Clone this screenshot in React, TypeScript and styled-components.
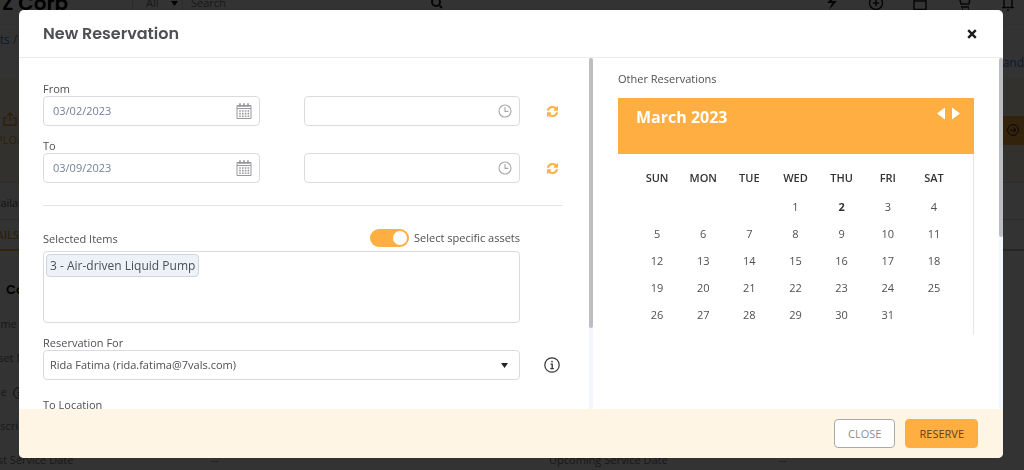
import React, { useState } from "react";
import styled, { createGlobalStyle } from "styled-components";

const orange = "#ffae41";
const border = "#dadbde";
const sans = '"Open Sans", "Noto Sans", sans-serif';
const display = 'Poppins, Inter, "Open Sans", sans-serif';

const GlobalStyle = createGlobalStyle`
  *, *::before, *::after { box-sizing: border-box; }
  body {
    margin: 0;
    overflow: hidden;
    background: #fff;
    color: #4e4f53;
    font-family: ${sans};
    font-size: 11px;
    line-height: 16px;
  }
  button, input, select { font: inherit; color: inherit; }
  button { cursor: pointer; }
`;

/* ---------- page behind the dialog ---------- */

const Page = styled.div`
  height: 100vh;
  overflow: hidden;
  color: #777;
`;

const TopBar = styled.header`
  display: flex;
  align-items: flex-start;
  height: 25px;
  padding-left: 2px;
  border-bottom: 1px solid #eee;
`;

const Company = styled.div`
  width: 130px;
  margin-top: -10px;
  color: #000;
  font: 600 20px/26px ${display};
`;

const Scope = styled.div`
  display: flex;
  gap: 12px;
  width: 51px;
  height: 16px;
  margin-top: -5px;
  padding-left: 13px;
  border: solid #ddd;
  border-width: 0 1px;
`;

const SearchLabel = styled.div`
  flex: 1;
  display: flex;
  gap: 205px;
  margin-top: -5px;
  padding-left: 8px;
`;

const TopIcons = styled.div`
  display: flex;
  gap: 28px;
  margin-top: -5px;
  padding-right: 8px;
  color: #222;
`;

const Crumbs = styled.div`
  display: flex;
  justify-content: space-between;
  height: 53px;
  padding-top: 7px;
  margin-left: -26px;
  font-size: 12px;
`;

const Link = styled.a<{ $low?: boolean }>`
  color: #4a7fd6;
  text-decoration: none;
  padding-top: ${(p) => (p.$low ? 23 : 0)}px;
`;

const Banner = styled.div`
  display: flex;
  justify-content: space-between;
  align-items: center;
  height: 105px;
  background: #fff5e2;
  border-bottom: 1px solid #ddd;
`;

const Upload = styled.div`
  display: flex;
  flex-direction: column;
  align-items: center;
  gap: 6px;
  margin-left: -12px;
  color: #e39a3a;
`;

const CheckOut = styled.div`
  display: flex;
  align-items: center;
  height: 29px;
  padding: 0 5px 0 26px;
  background: ${orange};
  color: #222;
`;

const Availability = styled.div`
  height: 37px;
  padding-top: 12px;
  margin-left: -12px;
  color: #555;
  border-bottom: 1px solid #ddd;
`;

const Tabs = styled.div`
  height: 31px;
  border-bottom: 2px solid #bbb;
`;

const Tab = styled.div`
  width: 80px;
  height: 31px;
  padding-top: 7px;
  margin-left: -24px;
  color: #e39a3a;
  font-weight: 600;
  border-bottom: 2px solid ${orange};
`;

const Details = styled.div`
  padding-top: 30px;
  margin-left: -14px;
`;

const DetailsTitle = styled.div`
  height: 34px;
  padding-left: 20px;
  color: #000;
  font: 600 13px/18px ${display};
`;

const DetailRow = styled.div`
  display: grid;
  grid-template-columns: 225px 338px 230px 1fr;
  height: 34px;
  line-height: 18px;
`;

const WithIcon = styled.span`
  display: flex;
  align-items: flex-start;
  gap: 6px;
  > svg { margin-top: 4px; }
`;

/* ---------- dialog ---------- */

const Overlay = styled.div`
  position: fixed;
  inset: 0;
  display: flex;
  padding: 10px 21px 12px 19px;
  background: rgba(0, 0, 0, 0.8);
`;

const Dialog = styled.section`
  flex: 1;
  display: flex;
  flex-direction: column;
  min-width: 0;
  overflow: hidden;
  background: #fff;
  border-radius: 5px;
`;

const DialogHeader = styled.header`
  display: flex;
  align-items: center;
  justify-content: space-between;
  flex: none;
  height: 48px;
  padding: 0 26px 0 24px;
  border-bottom: 1px solid #ececec;
`;

const Title = styled.h2`
  margin: 0;
  color: #4e4f53;
  font: 600 16px/24px ${display};
`;

const IconButton = styled.button`
  display: flex;
  padding: 0;
  border: 0;
  background: none;
`;

const DialogBody = styled.div`
  flex: 1;
  display: flex;
  min-height: 0;
`;

const Panel = styled.div<{ $span: number }>`
  flex: ${(p) => p.$span} 1 0;
  display: flex;
  min-width: 0;
`;

const Scroller = styled.div`
  flex: 1;
  min-width: 0;
  overflow: hidden;
`;

const Track = styled.div`
  flex: none;
  width: 4px;
  background: #f2f8fd;
`;

const Thumb = styled.div<{ $size: number }>`
  height: ${(p) => p.$size}%;
  background: #bdbdc4;
  border-radius: 2px;
`;

const Form = styled.form`
  padding: 22px 5px 0 24px;
`;

const FormRow = styled.div<{ $gap: number }>`
  display: grid;
  grid-template-columns: minmax(0, 1fr) 64px;
  margin-bottom: ${(p) => p.$gap}px;
`;

const Pair = styled.div`
  display: grid;
  grid-template-columns: 1fr 1fr;
  column-gap: 44px;
  align-items: end;
`;

const Aside = styled.div`
  display: flex;
  align-items: center;
  justify-content: center;
  align-self: end;
  height: 30px;
`;

const Label = styled.label`
  display: block;
  height: 16px;
  line-height: 18px;
`;

const InputBox = styled.div`
  display: flex;
  align-items: center;
  height: 30px;
  padding: 0 7px 0 9px;
  border: 1px solid ${border};
  border-radius: 4px;
`;

const TextInput = styled.input`
  flex: 1;
  min-width: 0;
  padding: 0;
  border: 0;
  outline: 0;
  background: none;
  color: #74819a;
`;

const Divider = styled.hr`
  height: 1px;
  margin: 22px 21px 23px 0;
  border: 0;
  background: #e4e4e6;
`;

const ItemsHead = styled.div`
  display: flex;
  align-items: center;
  justify-content: space-between;
  height: 18px;
  margin-bottom: 4px;
`;

const ToggleLabel = styled.label`
  display: flex;
  align-items: center;
  gap: 5px;
  line-height: 18px;
`;

const Toggle = styled.input`
  appearance: none;
  display: flex;
  justify-content: flex-end;
  width: 39px;
  height: 18px;
  margin: 0;
  padding: 2px;
  border-radius: 9px;
  background: #c5c7cc;
  &:checked { background: ${orange}; }
  &:not(:checked) { justify-content: flex-start; }
  &::before {
    content: "";
    width: 14px;
    height: 14px;
    border-radius: 50%;
    background: #fff;
  }
`;

const ItemsBox = styled.div`
  height: 72px;
  padding: 2px;
  border: 1px solid ${border};
  border-radius: 4px;
`;

const Tag = styled.span`
  display: inline-block;
  height: 23px;
  padding: 0 3px;
  border: 1px solid #ced4e2;
  border-radius: 4px;
  background: #edf1f8;
  font-size: 12px;
  line-height: 21px;
`;

const SelectBox = styled.div`
  display: grid;
  align-items: center;
  > * { grid-area: 1 / 1; }
  > svg { justify-self: end; margin-right: 12px; pointer-events: none; }
`;

const Select = styled.select`
  appearance: none;
  width: 100%;
  height: 30px;
  padding: 0 24px 0 6px;
  border: 1px solid ${border};
  border-radius: 4px;
  background: #fff;
`;

const Reservations = styled.div`
  padding: 12px 25px 0;
`;

const SideTitle = styled.div`
  height: 16px;
  margin-bottom: 12px;
  line-height: 18px;
`;

const MonthBar = styled.div`
  display: flex;
  align-items: flex-start;
  justify-content: space-between;
  height: 56px;
  padding: 9px 14px 0 18px;
  background: ${orange};
  color: #fff;
`;

const Month = styled.h3`
  margin: 0;
  font-size: 16px;
  font-weight: 700;
  line-height: 20px;
`;

const MonthNav = styled.div`
  display: flex;
  gap: 7px;
  color: #fff;
`;

const MonthBody = styled.div`
  padding: 10px 16px 7px;
  border-right: 1px solid #e6e6e8;
`;

const Calendar = styled.table`
  width: 100%;
  table-layout: fixed;
  border-collapse: collapse;
  text-align: center;
  th { height: 29px; padding: 0 0 2px; color: #333; font-weight: 600; }
  td { height: 27px; padding: 0; }
`;

const Day = styled.td<{ $today: boolean }>`
  font-weight: ${(p) => (p.$today ? 700 : 400)};
  color: ${(p) => (p.$today ? "#333" : "inherit")};
`;

const DialogFooter = styled.footer`
  display: flex;
  flex: none;
  align-items: center;
  justify-content: flex-end;
  gap: 10px;
  height: 49px;
  padding: 0 25px;
  background: #fef5e4;
`;

const Button = styled.button<{ $primary?: boolean }>`
  height: 29px;
  padding: 0 13px;
  border: 1px solid ${(p) => (p.$primary ? orange : "#a9a9a9")};
  border-radius: 4px;
  background: ${(p) => (p.$primary ? orange : "#fff")};
  color: ${(p) => (p.$primary ? "#5c431d" : "#8d8d8d")};
`;

/* ---------- icons ---------- */

const CalendarIcon = () => (
  <svg width="16" height="16" viewBox="0 0 16 16" fill="none" stroke="#98989c">
    <path d="M1 2.500h14v13H1z" />
    <path d="M1 5.500h14" />
    <path d="M1.500 3.500h13" stroke="#b4b4b8" />
    <path d="M4 .2v3.200M8 .2v3.200M12 .2v3.200" strokeWidth="1.600" />
    <path d="M3.200 8h10.200M3.200 10.600h10.200M3.200 13.200h10.200" strokeWidth="1.600" strokeDasharray="1.600 1.200" />
  </svg>
);

const ClockIcon = () => (
  <svg width="14" height="14" viewBox="0 0 14 14" fill="none" stroke="#a9a9ad" strokeWidth="1.100">
    <circle cx="7" cy="7" r="6" />
    <path d="M7 3v4.400h3.400" />
  </svg>
);

const RefreshIcon = () => (
  <svg width="11" height="11" viewBox="0 0 1536 1536" fill="#f8b149" stroke="#f8b149" strokeWidth="70">
    <path d="M1511 928q0 5-1 7-64 268-268 434.500T764 1536q-146 0-282.500-55T238 1324l-129 129q-19 19-45 19t-45-19-19-45V960q0-26 19-45t45-19h448q26 0 45 19t19 45-19 45l-137 137q71 66 161 102t187 36q134 0 250-65t186-179q11-17 53-117 8-23 30-23h192q13 0 22.500 9.500t9.500 22.500zM1536 128v448q0 26-19 45t-45 19h-448q-26 0-45-19t-19-45 19-45l138-138Q969 256 768 256q-134 0-250 65T332 500q-11 17-53 117-8 23-30 23H50q-13 0-22.500-9.500T18 608v-7q65-268 270-434.500T768 0q146 0 284 55.500T1297 212l130-129q19-19 45-19t45 19 19 45z" />
  </svg>
);

const InfoIcon = ({ size = 16 }: { size?: number }) => (
  <svg width={size} height={size} viewBox="0 0 16 16" fill="none" stroke="#333" strokeWidth="1.200">
    <circle cx="8" cy="8" r="7.200" />
    <path d="M6.600 7.200H8.200v4.300M6.400 11.600h3.400" strokeWidth="1.300" />
    <circle cx="8" cy="4.600" r=".6" fill="#333" strokeWidth=".6" />
  </svg>
);

const CaretDown = () => (
  <svg width="7" height="5" viewBox="0 0 7 5" fill="#222">
    <path d="M0 0h7L3.500 5z" />
  </svg>
);

const CrossIcon = () => (
  <svg width="10" height="10" viewBox="0 0 10 10" stroke="#1d1d1f" strokeWidth="2.400">
    <path d="M1.200 1.200l7.600 7.600M8.800 1.200L1.200 8.800" />
  </svg>
);

const Triangle = ({ right }: { right?: boolean }) => (
  <svg width="8" height="13" viewBox="0 0 8 13" fill="#fff">
    <path d={right ? "M0 0.500v12L8 6.500z" : "M8 0.500v12L0 6.500z"} />
  </svg>
);

const topIconPaths = [
  "M10 0L3 8h5l-3 7 8-9H8l3-6z",
  "M8 1.500a6.500 6.500 0 100 13 6.500 6.500 0 000-13zM8 5v6M5 8h6",
  "M2 2.500h12v12H2zM2 6h12",
  "M1 1h2l2 8h8l1-6H4M5 12h8M6 14h1M12 14h1",
  "M4 12V6a4 4 0 018 0v6M2 12.500h12M7 15h2",
];

const TopIcon = ({ d, filled }: { d: string; filled?: boolean }) => (
  <svg width="16" height="16" viewBox="0 0 16 16" fill={filled ? "currentColor" : "none"} stroke="currentColor" strokeWidth={filled ? 0 : 1.5}>
    <path d={d} />
  </svg>
);

/* ---------- data ---------- */

const weekdays = ["SUN", "MON", "TUE", "WED", "THU", "FRI", "SAT"];
const firstWeekday = 3;
const daysInMonth = 31;
const weeks = Array.from({ length: 5 }, (_, w) =>
  weekdays.map((_, d) => {
    const n = w * 7 + d - firstWeekday + 1;
    return n > 0 && n <= daysInMonth ? n : null;
  })
);

function DateRow({ id, label, value, gap }: { id: string; label: string; value: string; gap: number }) {
  return (
    <FormRow $gap={gap}>
      <Pair>
        <div>
          <Label htmlFor={id}>{label}</Label>
          <InputBox>
            <TextInput id={id} defaultValue={value} />
            <CalendarIcon />
          </InputBox>
        </div>
        <InputBox>
          <TextInput aria-label={`${label} time`} />
          <ClockIcon />
        </InputBox>
      </Pair>
      <Aside>
        <IconButton type="button" aria-label={`Reset ${label}`}>
          <RefreshIcon />
        </IconButton>
      </Aside>
    </FormRow>
  );
}

function AssetPage() {
  return (
    <Page>
      <TopBar>
        <Company>Z Corp</Company>
        <Scope>
          All
          <svg width="7" height="16" viewBox="0 0 7 16"><path d="M0 6h7l-3.500 5z" /></svg>
        </Scope>
        <SearchLabel>
          Search
          <svg width="12" height="14" viewBox="0 0 12 14" fill="none" stroke="#222" strokeWidth="2">
            <circle cx="5" cy="7" r="4" />
            <path d="M8 10l3 3" />
          </svg>
        </SearchLabel>
        <TopIcons>
          {topIconPaths.map((d, i) => <TopIcon key={d} d={d} filled={i === 0} />)}
        </TopIcons>
      </TopBar>
      <Crumbs>
        <span><Link href="#">Assets</Link> /</span>
        <Link href="#" $low>eand</Link>
      </Crumbs>
      <Banner>
        <Upload>
          <svg width="14" height="14" viewBox="0 0 14 14" fill="none" stroke="currentColor" strokeWidth="1.400">
            <path d="M4 6H1v7h12V6h-3M7 9V1M4 4l3-3 3 3" />
          </svg>
          UPLOAD
        </Upload>
        <CheckOut>
          <svg width="12" height="12" viewBox="0 0 12 12" fill="none" stroke="currentColor">
            <circle cx="6" cy="6" r="5.400" />
            <path d="M3 6h6M6.500 3.500L9 6 6.500 8.500" />
          </svg>
        </CheckOut>
      </Banner>
      <Availability>Available</Availability>
      <Tabs><Tab>DETAILS</Tab></Tabs>
      <Details>
        <DetailsTitle>Core</DetailsTitle>
        <DetailRow>Name</DetailRow>
        <DetailRow>Asset No</DetailRow>
        <DetailRow><WithIcon>Ty e<InfoIcon size={12} /></WithIcon></DetailRow>
        <DetailRow>Descri</DetailRow>
        <DetailRow>
          <span>Last Service Date</span>
          <span>--</span>
          <span>Upcoming Service Date</span>
          <span>--</span>
        </DetailRow>
      </Details>
    </Page>
  );
}

export default function App() {
  const [specific, setSpecific] = useState(true);
  return (
    <>
      <GlobalStyle />
      <AssetPage />
      <Overlay>
        <Dialog role="dialog" aria-labelledby="dialog-title">
          <DialogHeader>
            <Title id="dialog-title">New Reservation</Title>
            <IconButton type="button" aria-label="Close dialog"><CrossIcon /></IconButton>
          </DialogHeader>
          <DialogBody>
            <Panel $span={7}>
              <Scroller>
                <Form>
                  <DateRow id="from" label="From" value="03/02/2023" gap={11} />
                  <DateRow id="to" label="To" value="03/09/2023" gap={0} />
                  <Divider />
                  <FormRow $gap={11}>
                    <div>
                      <ItemsHead>
                        <Label as="span">Selected Items</Label>
                        <ToggleLabel>
                          <Toggle type="checkbox" checked={specific} onChange={(e) => setSpecific(e.target.checked)} />
                          Select specific assets
                        </ToggleLabel>
                      </ItemsHead>
                      <ItemsBox><Tag>3 - Air-driven Liquid Pump</Tag></ItemsBox>
                    </div>
                  </FormRow>
                  <FormRow $gap={16}>
                    <div>
                      <Label htmlFor="reserve-for">Reservation For</Label>
                      <SelectBox>
                        <Select id="reserve-for">
                          <option>Rida Fatima (rida.fatima@7vals.com)</option>
                        </Select>
                        <CaretDown />
                      </SelectBox>
                    </div>
                    <Aside><InfoIcon /></Aside>
                  </FormRow>
                  <Label as="span">To Location</Label>
                </Form>
              </Scroller>
              <Track><Thumb $size={77} /></Track>
            </Panel>
            <Panel $span={5}>
              <Scroller>
                <Reservations>
                  <SideTitle>Other Reservations</SideTitle>
                  <MonthBar>
                    <Month>March 2023</Month>
                    <MonthNav>
                      <IconButton type="button" aria-label="Previous month"><Triangle /></IconButton>
                      <IconButton type="button" aria-label="Next month"><Triangle right /></IconButton>
                    </MonthNav>
                  </MonthBar>
                  <MonthBody>
                    <Calendar>
                      <thead>
                        <tr>{weekdays.map((d) => <th key={d}>{d}</th>)}</tr>
                      </thead>
                      <tbody>
                        {weeks.map((week, w) => (
                          <tr key={w}>
                            {week.map((n, d) => <Day key={d} $today={n === 2}>{n}</Day>)}
                          </tr>
                        ))}
                      </tbody>
                    </Calendar>
                  </MonthBody>
                </Reservations>
              </Scroller>
              <Track><Thumb $size={51} /></Track>
            </Panel>
          </DialogBody>
          <DialogFooter>
            <Button type="button">CLOSE</Button>
            <Button type="button" $primary>RESERVE</Button>
          </DialogFooter>
        </Dialog>
      </Overlay>
    </>
  );
}
